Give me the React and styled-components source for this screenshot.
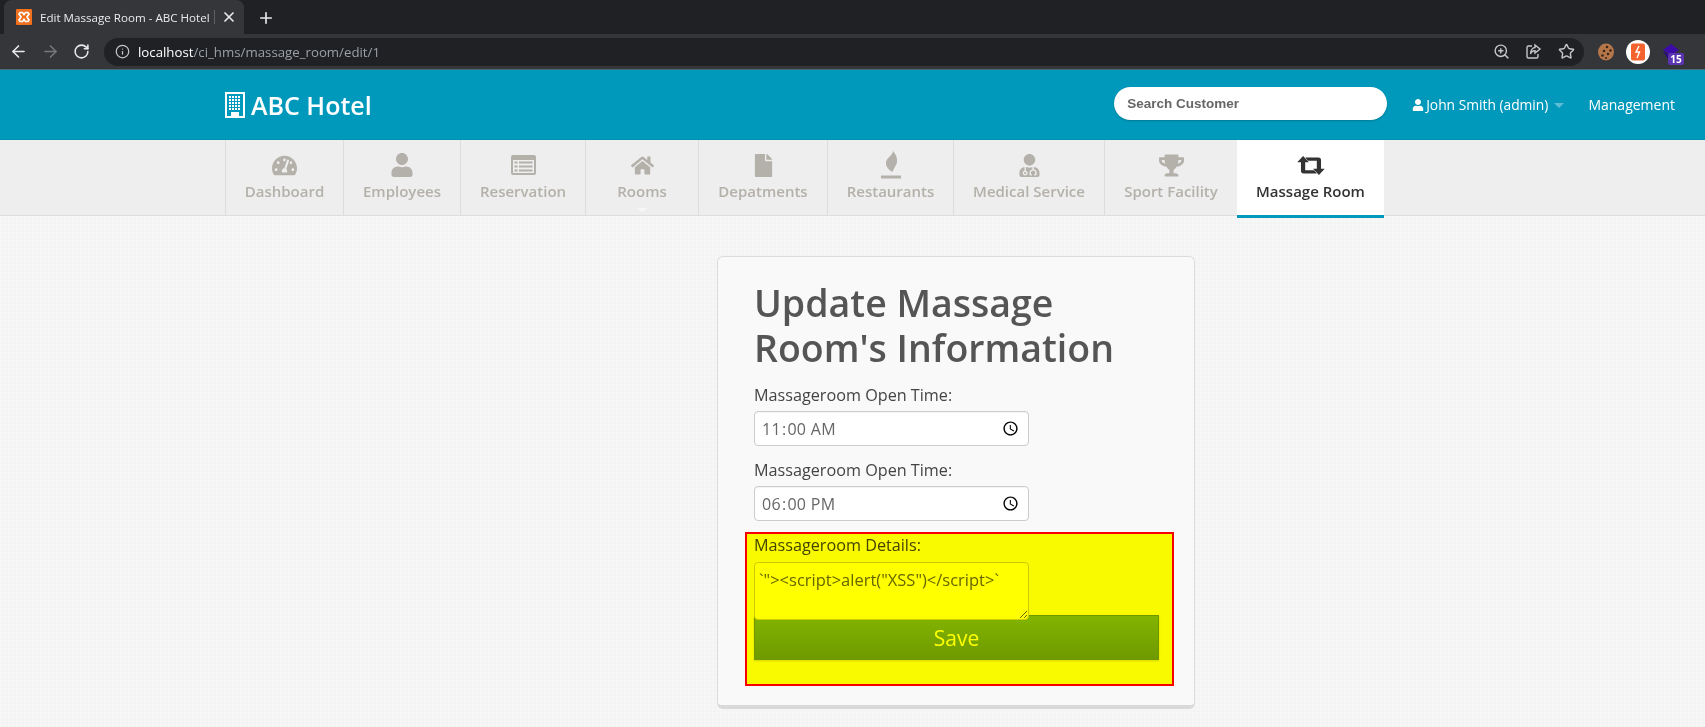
import React from 'react'
import styled, { createGlobalStyle } from 'styled-components'
import { ArrowLeft, ArrowRight, RotateCw, Info, ZoomIn, Star, X, Plus } from 'lucide-react'
import { FaTachometerAlt, FaUser, FaHome, FaFile, FaUserMd, FaTrophy } from 'react-icons/fa'

const GlobalStyle = createGlobalStyle`
html, body { margin: 0; padding: 0; height: 727px; overflow: hidden; }
body { font-family: "Open Sans", "Liberation Sans", sans-serif; background: #f5f5f5; }
* { box-sizing: border-box; }
`

const TabStrip = styled.div`
height: 34px;
background: #202124;
display: flex;
align-items: flex-end;
padding-left: 4px;
`
const Tab = styled.div`
width: 240px;
height: 34px;
background: #35363a;
border-radius: 8px 8px 0 0;
display: flex;
align-items: center;
padding: 0 0 0 12px;
color: #e8eaed;
font-size: 11.6px;
`
const TabTitle = styled.span`
margin-left: 8px;
width: 172px;
white-space: nowrap;
`
const TabSep = styled.span`
width: 1px;
height: 14px;
background: #5f6064;
margin-left: 2px;
`
const TabClose = styled.span`
display: flex;
margin-left: 6px;
color: #e8eaed;
`
const NewTab = styled.span`
display: flex;
margin-left: 13px;
margin-bottom: 7px;
color: #e8eaed;
`
const Toolbar = styled.div`
height: 36px;
background: #35363a;
display: flex;
align-items: center;
padding: 0 0 0 9px;
border-bottom: 1px solid #4b6a78;
`
const NavBtn = styled.span`
display: flex;
width: 20px;
margin-right: ${p => p.gap}px;
color: ${p => (p.off ? '#77787b' : '#e8eaed')};
`
const Omnibox = styled.div`
width: 1480px;
flex-shrink: 0;
height: 28px;
margin-left: 11px;
border-radius: 14px;
background: #202124;
display: flex;
align-items: center;
padding: 0 9px 0 11px;
`
const Url = styled.div`
margin-left: 8px;
font-size: 13.25px;
color: #9aa0a6;
flex: 1;
b { color: #fff; font-weight: 400; }
`
const OmniIcon = styled.span`
display: flex;
margin-left: ${p => p.gap}px;
color: #c4c7c9;
`
const Extensions = styled.div`
display: flex;
align-items: center;
margin-left: 14px;
`
const ExtBadge = styled.span`
position: absolute;
right: -5px;
bottom: -6px;
width: 16px;
height: 12px;
border-radius: 2px;
background: #5b35b1;
color: #fff;
font-size: 10px;
font-weight: 700;
line-height: 12px;
text-align: center;
`
const ExtIcon = styled.span`
position: relative;
display: flex;
margin-right: ${p => p.gap}px;
`

const Header = styled.header`
height: 70px;
background: #0099bb;
display: flex;
align-items: center;
padding: 0 30px 0 225px;
border-bottom: 1px solid #0090b0;
color: #fff;
`
const Brand = styled.div`
display: flex;
align-items: center;
gap: 6px;
font-size: 25px;
font-weight: 600;
flex: 1;
`
const Search = styled.input`
width: 273px;
height: 33px;
border: none;
border-radius: 17px;
padding: 0 13px;
margin: 0 25px 2px 0;
font: 700 13.5px "Liberation Sans", sans-serif;
background: #fff;
box-shadow: 0 1px 2px rgba(0,0,0,.2);
&::placeholder { color: #666; opacity: 1; }
`
const UserMenu = styled.div`
display: flex;
align-items: center;
font-size: 13.8px;
gap: 2px;
margin-right: 24px;
`
const Caret = styled.span`
width: 0;
height: 0;
margin-left: 4px;
margin-top: 2px;
border-left: 5px solid transparent;
border-right: 5px solid transparent;
border-top: 5px solid #5cbdd4;
`
const MenuLink = styled.span`
font-size: 14px;
`

const NavBar = styled.nav`
height: 76px;
background: #eee;
border-bottom: 1px solid #ddd;
display: flex;
padding-left: 225px;
`
const NavItem = styled.div`
position: relative;
width: ${p => p.w}px;
height: ${p => (p.active ? 78 : 75)}px;
display: flex;
flex-direction: column;
align-items: center;
border-left: ${p => (p.active ? 'none' : '1px solid #ddd')};
background: ${p => (p.active ? '#fff' : 'transparent')};
border-bottom: ${p => (p.active ? '3px solid #0099bb' : 'none')};
color: ${p => (p.active ? '#333' : '#b4b0aa')};
font-size: 15px;
font-weight: 600;
`
const NavIcon = styled.span`
height: 32px;
margin-top: 9px;
display: flex;
align-items: center;
justify-content: center;
color: ${p => (p.active ? '#333' : '#b4b0aa')};
`
const NavDrop = styled.span`
position: absolute;
left: 50%;
bottom: 3px;
margin-left: -5px;
border-left: 5px solid transparent;
border-right: 5px solid transparent;
border-top: 4px solid #f7f7f7;
`

const Page = styled.main`
height: 511px;
padding: 40px 0 0 717px;
background-color: #f5f5f5;
background-image:
  radial-gradient(circle at 1px 1px, #f7f7f7 1px, transparent 1.5px),
  radial-gradient(circle at 3px 3px, #f3f3f3 1px, transparent 1.5px);
background-size: 4px 4px;
`
const Card = styled.section`
width: 478px;
height: 453px;
background: #f9f9f9;
border: 1px solid #dcdcdc;
border-bottom: 4px solid #d9d9d9;
border-radius: 6px;
padding: 23px 36px 0;
`
const Title = styled.h1`
margin: 0 0 13px;
width: 380px;
font-size: 37.5px;
line-height: 45px;
font-weight: 600;
color: #555;
`
const Label = styled.label`
display: block;
padding-top: 1px;
font-size: 16.2px;
line-height: 22px;
color: #444;
`
const Field = styled.div`
margin-bottom: ${p => p.mb}px;
`
const TimeInput = styled.input`
display: block;
width: 275px;
height: 35px;
margin-top: 5px;
padding: 0 6px;
background: #fff;
border: 1px solid #ccc;
border-radius: 4px;
font: 16px "Open Sans", sans-serif;
letter-spacing: 0.3px;
color: #666;
box-shadow: inset 0 1px 1px rgba(0,0,0,.05);
`
const Highlighted = styled.div`
position: relative;
width: 405px;
`
const Details = styled.textarea`
position: relative;
z-index: 1;
display: block;
width: 275px;
height: 58px;
margin-top: 6px;
padding: 5px 4px;
background: #fff;
border: 1px solid #ccc;
border-radius: 4px;
font: 16.5px "Open Sans", sans-serif;
color: #666;
outline: none;
`
const SaveButton = styled.button`
display: block;
width: 405px;
height: 45px;
margin-top: -5px;
border: 1px solid #6f9800;
background: linear-gradient(#82b400, #6f9a00);
color: #fff;
font: 21px "Open Sans", sans-serif;
box-shadow: 0 1px 2px rgba(0,0,0,.15);
`
const Overlay = styled.div`
position: absolute;
z-index: 2;
top: -1px;
left: -9px;
width: 429px;
height: 154px;
background: #ffff00;
border: 2px solid #ff0000;
mix-blend-mode: multiply;
pointer-events: none;
`

const Favicon = () => (
  <svg width="16" height="16" viewBox="0 0 16 16">
    <rect width="16" height="16" rx="1" fill="#f0701e" />
    <path d="M4 3.500h2.500L8 5.500l1.500-2H12l1 1.500-2 3 2 3-1 1.500H9.500L8 10.500l-1.500 2H4l-1-1.500 2-3-2-3z" fill="none" stroke="#fff" strokeWidth="1.700" />
  </svg>
)
const ShareIcon = () => (
  <svg width="17" height="17" viewBox="0 0 17 17" fill="none" stroke="#c4c7c9" strokeWidth="1.400">
    <path d="M7 3H3.500A1.500 1.500 0 0 0 2 4.500v9A1.500 1.500 0 0 0 3.500 15h8a1.500 1.500 0 0 0 1.500-1.500V11" />
    <path d="M10 2l5 4-5 4V7.700C8 7.700 6 9 5.500 11 5.500 7.500 7.500 4.800 10 4.500z" />
  </svg>
)
const CookieIcon = () => (
  <svg width="16" height="18" viewBox="0 0 16 18">
    <ellipse cx="8" cy="9" rx="8" ry="8.500" fill="#b5764a" />
    <g fill="#3c2415">
      <circle cx="9" cy="4" r="1.300" /><circle cx="12.500" cy="7.500" r="1.300" /><circle cx="6" cy="8" r="1.300" />
      <circle cx="10" cy="11" r="1.300" /><circle cx="4.500" cy="12.500" r="1.300" /><circle cx="8" cy="15" r="1" />
    </g>
  </svg>
)
const BoltIcon = () => (
  <svg width="24" height="24" viewBox="0 0 24 24">
    <circle cx="12" cy="12" r="12" fill="#fff" />
    <rect x="5" y="3.500" width="14" height="17" rx="2" fill="#f4622e" />
    <path d="M13 6l-3 6h3.500L11 18" fill="none" stroke="#fff" strokeWidth="1.400" />
  </svg>
)
const GemIcon = () => (
  <svg width="16" height="15" viewBox="0 0 16 15">
    <path d="M8 0l8 6-8 5-8-5z" fill="#3d0ca8" />
    <path d="M0 7l8 5 2 3H5z" fill="#2a0a80" />
  </svg>
)
const BuildingIcon = () => (
  <svg width="20" height="26" viewBox="0 0 20 26">
    <path d="M0 0h20v26H0z M2 2v22h4v-4h8v4h4V2z" fill="#fff" fillRule="evenodd" />
    <g fill="#fff">
      {[4, 7, 10, 13].map(x => [4, 7, 10, 13, 16].map(y => <rect key={`${x}-${y}`} x={x} y={y} width="2" height="2" />))}
    </g>
  </svg>
)
const ListIcon = () => (
  <svg width="25" height="20" viewBox="0 0 25 20">
    <rect width="25" height="20" rx="2" fill="#b4b0aa" />
    <rect x="2" y="5" width="21" height="13" fill="#eee" />
    <g fill="#b4b0aa">
      <rect x="3.500" y="6.500" width="3" height="2" /><rect x="8" y="6.500" width="13.500" height="2" />
      <rect x="3.500" y="10.500" width="3" height="2" /><rect x="8" y="10.500" width="13.500" height="2" />
      <rect x="3.500" y="14.500" width="3" height="2" /><rect x="8" y="14.500" width="13.500" height="2" />
    </g>
  </svg>
)
const FlameIcon = () => (
  <svg width="20" height="28" viewBox="0 0 20 28" fill="#b4b0aa">
    <path d="M12 0c3 3.500 4.500 7 4 11-.5 3-2.500 5-4.500 10-3.500-2-7-5.500-6.500-9.500C5.500 6.500 11.500 5 12 0z" />
    <rect x="0" y="24.500" width="20" height="3" />
  </svg>
)
const RetweetIcon = () => (
  <svg width="28" height="19" viewBox="0 0 26 18" fill="#333">
    <path d="M5.500 0L11 6H7.500v7.500H16l2.500 3H6a2.500 2.500 0 0 1-2.500-2.500V6H0z" />
    <path d="M20.500 18L15 12h3.500V4.500H10L7.500 1.500H20a2.500 2.500 0 0 1 2.500 2.500V12H26z" />
  </svg>
)

const navItems = [
  { label: 'Dashboard', w: 118, icon: <FaTachometerAlt size={25} /> },
  { label: 'Employees', w: 117, icon: <FaUser size={24} /> },
  { label: 'Reservation', w: 125, icon: <ListIcon /> },
  { label: 'Rooms', w: 113, icon: <FaHome size={23} />, drop: true },
  { label: 'Depatments', w: 129, icon: <FaFile size={23} /> },
  { label: 'Restaurants', w: 126, icon: <FlameIcon /> },
  { label: 'Medical Service', w: 151, icon: <FaUserMd size={23} /> },
  { label: 'Sport Facility', w: 133, icon: <FaTrophy size={25} /> },
  { label: 'Massage Room', w: 147, icon: <RetweetIcon />, active: true },
]

const App = () => {
  return (
    <>
      <GlobalStyle />
      <TabStrip>
        <Tab>
          <Favicon />
          <TabTitle>Edit Massage Room - ABC Hotel</TabTitle>
          <TabSep />
          <TabClose><X size={16} strokeWidth={2.5} /></TabClose>
        </Tab>
        <NewTab><Plus size={18} strokeWidth={2.2} /></NewTab>
      </TabStrip>
      <Toolbar>
        <NavBtn gap={12}><ArrowLeft size={19} strokeWidth={2} /></NavBtn>
        <NavBtn gap={12} off><ArrowRight size={19} strokeWidth={2} /></NavBtn>
        <NavBtn gap={0}><RotateCw size={17} strokeWidth={2.2} /></NavBtn>
        <Omnibox>
          <Info size={15} color="#c4c7c9" />
          <Url><b>localhost</b>/ci_hms/massage_room/edit/1</Url>
          <OmniIcon gap={0}><ZoomIn size={17} /></OmniIcon>
          <OmniIcon gap={15}><ShareIcon /></OmniIcon>
          <OmniIcon gap={16}><Star size={17} /></OmniIcon>
        </Omnibox>
        <Extensions>
          <ExtIcon gap={12}><CookieIcon /></ExtIcon>
          <ExtIcon gap={13}><BoltIcon /></ExtIcon>
          <ExtIcon gap={0}><GemIcon /><ExtBadge>15</ExtBadge></ExtIcon>
        </Extensions>
      </Toolbar>
      <Header>
        <Brand><BuildingIcon />ABC Hotel</Brand>
        <Search placeholder="Search Customer" />
        <UserMenu><FaUser size={12} />John Smith (admin)<Caret /></UserMenu>
        <MenuLink>Management</MenuLink>
      </Header>
      <NavBar>
        {navItems.map(item => (
          <NavItem key={item.label} w={item.w} active={item.active}>
            <NavIcon active={item.active}>{item.icon}</NavIcon>
            {item.label}
            {item.drop && <NavDrop />}
          </NavItem>
        ))}
      </NavBar>
      <Page>
        <Card>
          <Title>Update Massage Room's Information</Title>
          <Field mb={12}>
            <Label>Massageroom Open Time:</Label>
            <TimeInput type="time" defaultValue="11:00" />
          </Field>
          <Field mb={12}>
            <Label>Massageroom Open Time:</Label>
            <TimeInput type="time" defaultValue="18:00" />
          </Field>
          <Highlighted>
            <Label>Massageroom Details:</Label>
            <Details defaultValue={'`"><script>alert("XSS")</script>`'} />
            <SaveButton>Save</SaveButton>
            <Overlay />
          </Highlighted>
        </Card>
      </Page>
    </>
  )
}

export default App
